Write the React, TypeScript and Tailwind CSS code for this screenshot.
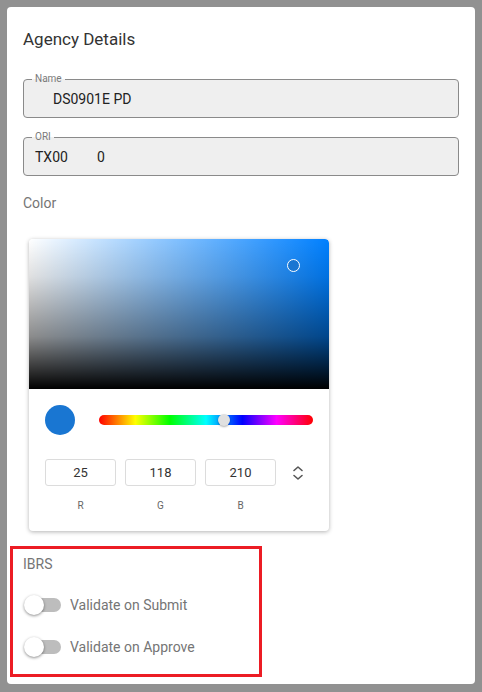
import React from 'react';

const Field = ({ label, children }: { label: string; children: React.ReactNode }) => (
  <div className="relative h-[39px] rounded-[4px] border border-[#8a8a8a] bg-[#efefef] px-[11px] flex items-center">
    <span className="absolute -top-[7px] left-[8px] px-[3px] text-[10px] leading-[12px] text-[#7a7a7a] bg-[linear-gradient(to_bottom,#fff_50%,#efefef_50%)]">
      {label}
    </span>
    <span className="text-[14px] text-[#222] pt-[1px]">{children}</span>
  </div>
);

const Toggle = ({ label }: { label: string }) => (
  <div className="flex items-center h-[20px]">
    <div className="relative w-[38px] h-[20px] flex items-center">
      <div className="ml-[3px] w-[34px] h-[14px] rounded-full bg-[#bdbdbd]" />
      <div className="absolute left-0 top-0 w-[20px] h-[20px] rounded-full bg-white shadow-[0_1px_3px_rgba(0,0,0,0.45)]" />
    </div>
    <span className="ml-[8px] text-[14px] text-[#757575]">{label}</span>
  </div>
);

const App = () => {
  const rgb = [
    { v: '25', l: 'R' },
    { v: '118', l: 'G' },
    { v: '210', l: 'B' },
  ];

  return (
    <div className="min-h-[692px] bg-[#919191] p-[7px] font-['Roboto',sans-serif]">
      <div className="bg-white rounded-[4px] h-[677px] w-[468px] pl-[16px] pr-[16px] pt-[20px]">
        <h1 className="text-[17px] leading-[24px] text-[#333]">Agency Details</h1>

        <div className="mt-[28px] flex flex-col gap-[19px]">
          <Field label="Name">
            <span className="inline-block w-[18px]" />
            DS0901E PD
          </Field>
          <Field label="ORI">
            TX00
            <span className="inline-block w-[29px]" />
            0
          </Field>
        </div>

        {/* Color */}
        <div className="mt-[17px] text-[14px] text-[#757575]">Color</div>

        <div className="mt-[25px] ml-[6px] w-[300px] rounded-[4px] bg-white shadow-[0_1px_4px_rgba(0,0,0,0.3)] overflow-hidden">
          <div className="relative h-[150px] bg-[linear-gradient(to_top,#000_0%,rgba(0,0,0,0.45)_35%,rgba(0,0,0,0.12)_75%,rgba(0,0,0,0)_100%),linear-gradient(to_right,#fff,rgba(255,255,255,0)),linear-gradient(#0080ff,#0080ff)] rounded-tr-[4px]">
            <div className="absolute left-[258px] top-[20px] w-[13px] h-[13px] rounded-full border-[1.5px] border-white bg-[#1976d2]" />
          </div>

          <div className="flex items-center h-[62px] pl-[16px] pr-[16px]">
            <div className="w-[30px] h-[30px] rounded-full bg-[#1976d2]" />
            <div className="relative ml-[24px] flex-1 h-[10px] rounded-full bg-[linear-gradient(to_right,#f00_0%,#ff0_17%,#0f0_33%,#0ff_50%,#00f_67%,#f0f_83%,#f00_100%)]">
              <div className="absolute left-[119px] -top-[1px] w-[12px] h-[12px] rounded-full bg-[#e0e0e0] shadow-[0_1px_2px_rgba(0,0,0,0.3)]" />
            </div>
          </div>

          <div className="flex items-start pl-[16px] pt-[8px] pb-[18px]">
            <div className="flex gap-[9px]">
              {rgb.map((c) => (
                <div key={c.l} className="flex flex-col items-center w-[71px]">
                  <div className="w-full h-[27px] rounded-[3px] border border-[#dcdcdc] flex items-center justify-center text-[13px] text-[#333]">
                    {c.v}
                  </div>
                  <div className="mt-[12px] text-[10px] text-[#666]">{c.l}</div>
                </div>
              ))}
            </div>
            <svg className="ml-[16px] mt-[6px]" width="12" height="16" viewBox="0 0 12 16" fill="none" stroke="#555" strokeWidth="1.6" strokeLinecap="round" strokeLinejoin="round">
              <path d="M2 5.5 L6 2 L10 5.5" />
              <path d="M2 10.5 L6 14 L10 10.5" />
            </svg>
          </div>
        </div>

        {/* IBRS */}
        <div className="mt-[15px] -ml-[13px] w-[252px] h-[131px] border-[3px] border-[#ec1c24] pl-[10px] pt-[6px]">
          <div className="text-[14px] leading-[18px] text-[#757575]">IBRS</div>
          <div className="mt-[22px] flex flex-col gap-[22px] pl-[1px]">
            <Toggle label="Validate on Submit" />
            <Toggle label="Validate on Approve" />
          </div>
        </div>
      </div>
    </div>
  );
};

export default App;
